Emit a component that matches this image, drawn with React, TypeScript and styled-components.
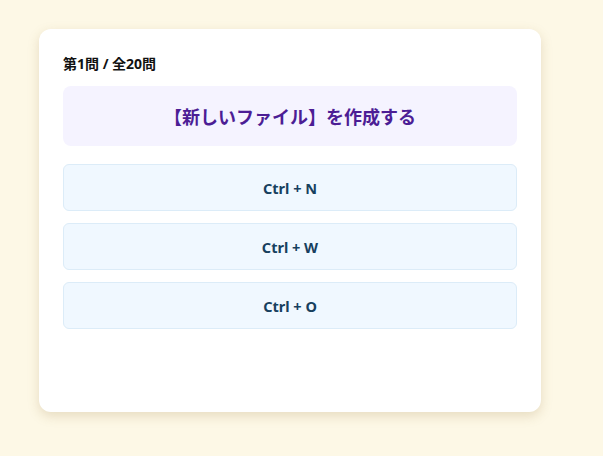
import styled, { createGlobalStyle } from 'styled-components';

const GlobalStyle = createGlobalStyle`
  html, body {
    margin: 0;
    background: #fdf8e6;
  }
  body {
    font-family: "Noto Sans", "Noto Sans CJK JP", sans-serif;
  }
`;

const options = ['Ctrl + N', 'Ctrl + W', 'Ctrl + O'];

function App() {
  return (
    <>
      <GlobalStyle />
      <Page>
        <Card>
          <Progress>第1問 / 全20問</Progress>
          <Question>【新しいファイル】を作成する</Question>
          <OptionList>
            {options.map((o) => (
              <OptionButton key={o}>{o}</OptionButton>
            ))}
          </OptionList>
        </Card>
      </Page>
    </>
  );
}

const Page = styled.main`
  min-height: 456px;
  box-sizing: border-box;
  padding: 29px 0 0 39px;
`;

const Card = styled.section`
  width: 502px;
  height: 383px;
  box-sizing: border-box;
  padding: 24px;
  background: #ffffff;
  border-radius: 12px;
  box-shadow: 0 4px 12px rgba(150, 120, 60, 0.22);
  display: flex;
  flex-direction: column;
`;

const Progress = styled.div`
  font-family: "Noto Sans", "Noto Sans CJK JP", sans-serif;
  font-size: 14px;
  font-weight: 700;
  line-height: 22px;
  color: #111111;
  margin-bottom: 11px;
`;

const Question = styled.div`
  height: 60px;
  display: flex;
  align-items: center;
  justify-content: center;
  background: #f5f3ff;
  border-radius: 8px;
  font-family: "Noto Sans CJK JP", sans-serif;
  font-size: 18px;
  font-weight: 700;
  color: #4c1d95;
  margin-bottom: 18px;
`;

const OptionList = styled.div`
  display: flex;
  flex-direction: column;
  gap: 12px;
`;

const OptionButton = styled.button`
  height: 47px;
  border: 1px solid #dcecf8;
  background: #f0f8ff;
  border-radius: 6px;
  font-family: "Noto Sans", sans-serif;
  font-size: 14.5px;
  font-weight: 700;
  color: #17405e;
  cursor: pointer;
`;

export default App;
